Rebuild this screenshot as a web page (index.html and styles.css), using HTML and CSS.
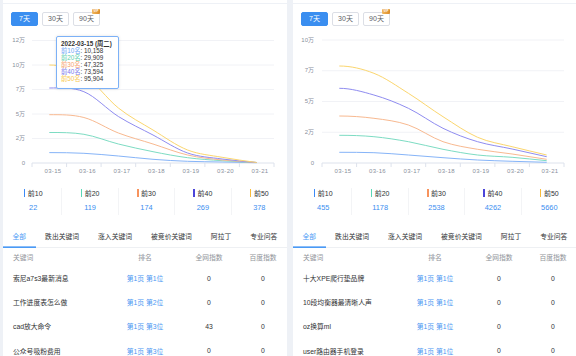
FILE: index.html
```html
<!DOCTYPE html>
<html lang="zh-CN">
<head>
<meta charset="UTF-8" />
<meta name="viewport" content="width=device-width, initial-scale=1"/>
<title>关键词排名趋势</title>
<link rel="stylesheet" href="styles.css">
</head>
<body>

<div class="page">

  <!-- Левая колонка: PC -->
  <div class="col">
    <div class="card-end"></div>
    <section class="panel">
      <div class="ranges">
        <span class="range active">7天</span>
        <span class="range">30天</span>
        <span class="range">90天<i class="vip">VIP</i></span>
      </div>

      <div class="chart">
        <svg width="284" height="150" viewBox="0 0 284 150">
          <g class="grid">
            <line x1="29" y1="10.5" x2="271" y2="10.5"/>
            <line x1="29" y1="35" x2="271" y2="35"/>
            <line x1="29" y1="59.5" x2="271" y2="59.5"/>
            <line x1="29" y1="84" x2="271" y2="84"/>
            <line x1="29" y1="108.5" x2="271" y2="108.5"/>
          </g>
          <g class="axis">
            <line x1="29" y1="133" x2="271" y2="133"/>
            <line x1="29" y1="133" x2="29" y2="137"/>
            <line x1="63.6" y1="133" x2="63.6" y2="137"/>
            <line x1="98.1" y1="133" x2="98.1" y2="137"/>
            <line x1="132.7" y1="133" x2="132.7" y2="137"/>
            <line x1="167.3" y1="133" x2="167.3" y2="137"/>
            <line x1="201.9" y1="133" x2="201.9" y2="137"/>
            <line x1="236.4" y1="133" x2="236.4" y2="137"/>
            <line x1="271" y1="133" x2="271" y2="137"/>
          </g>
          <g class="ylabels">
            <text x="22" y="10.5">12万</text>
            <text x="22" y="35">10万</text>
            <text x="22" y="59.5">7万</text>
            <text x="22" y="84">5万</text>
            <text x="22" y="108.5">2万</text>
            <text x="22" y="133">0</text>
          </g>
          <g class="xlabels">
            <text x="50" y="141">03-15</text>
            <text x="84.5" y="141">03-16</text>
            <text x="119" y="141">03-17</text>
            <text x="153.5" y="141">03-18</text>
            <text x="188" y="141">03-19</text>
            <text x="222.5" y="141">03-20</text>
            <text x="257" y="141">03-21</text>
          </g>
          <path class="s10" d="M46.3 122.6 C57.8 122.6 69.4 122.7 80.9 123.3 S103.9 125 115.4 126 S138.5 128.4 150 129.3 S173.1 130.9 184.6 131.3 S207.6 131.8 219.1 132 S242.2 132.5 253.7 132.7"/>
          <path class="s20" d="M46.3 102.5 C57.8 102.5 69.4 102.4 80.9 104.3 S103.9 111.1 115.4 114 S138.5 119.4 150 121.7 S173.1 126.2 184.6 127.7 S207.6 129.9 219.1 130.7 S242.2 132 253.7 132.5"/>
          <path class="s30" d="M46.3 84.7 C57.8 84.7 69.4 84.5 80.9 87.5 S103.9 98.6 115.4 103 S138.5 110.3 150 114 S173.1 122.3 184.6 125 S207.6 128.8 219.1 130 S242.2 131.7 253.7 132.5"/>
          <path class="s40" d="M46.3 58 C57.8 58 69.4 57 80.9 61.7 S103.9 79.3 115.4 86.5 S138.5 98.9 150 105 S173.1 119 184.6 123 S207.6 127.4 219.1 129 S242.2 131.3 253.7 132.5"/>
          <path class="s50" d="M46.3 35 C57.8 35 69.4 37.8 80.9 45 S103.9 68.8 115.4 78 S138.5 93 150 100 S173.1 115.5 184.6 120 S207.6 125.2 219.1 127.3 S242.2 130.8 253.7 132.5"/>
        </svg>

        <div class="tooltip">
          <div class="tip-title">2022-03-15 (周二)</div>
          <div><span class="c10">前10名</span>: 10,158</div>
          <div><span class="c20">前20名</span>: 29,909</div>
          <div><span class="c30">前30名</span>: 47,325</div>
          <div><span class="c40">前40名</span>: 73,594</div>
          <div><span class="c50">前50名</span>: 95,904</div>
        </div>
      </div>

      <div class="stats">
        <div class="stat"><div class="stat-name b10">前10</div><div class="stat-num">22</div></div>
        <div class="stat"><div class="stat-name b20">前20</div><div class="stat-num">119</div></div>
        <div class="stat"><div class="stat-name b30">前30</div><div class="stat-num">174</div></div>
        <div class="stat"><div class="stat-name b40">前40</div><div class="stat-num">269</div></div>
        <div class="stat"><div class="stat-name b50">前50</div><div class="stat-num">378</div></div>
      </div>

      <div class="tabs">
        <span class="tab active">全部</span>
        <span class="tab">跌出关键词</span>
        <span class="tab">涨入关键词</span>
        <span class="tab">被竞价关键词</span>
        <span class="tab">阿拉丁</span>
        <span class="tab">专业问答</span>
      </div>

      <div class="table">
        <div class="row head"><span>关键词</span><span>排名</span><span>全网指数</span><span>百度指数</span></div>
        <div class="row"><span>索尼a7s3最新消息</span><a href="#">第1页 第1位</a><span>0</span><span>0</span></div>
        <div class="row"><span>工作进度表怎么做</span><a href="#">第1页 第2位</a><span>0</span><span>0</span></div>
        <div class="row"><span>cad放大命令</span><a href="#">第1页 第3位</a><span>43</span><span>0</span></div>
        <div class="row"><span>公众号吸粉费用</span><a href="#">第1页 第3位</a><span>0</span><span>0</span></div>
      </div>
    </section>
  </div>

  <!-- Правая колонка: мобильные -->
  <div class="col">
    <div class="card-end"></div>
    <section class="panel">
      <div class="ranges">
        <span class="range active">7天</span>
        <span class="range">30天</span>
        <span class="range">90天<i class="vip">VIP</i></span>
      </div>

      <div class="chart">
        <svg width="284" height="150" viewBox="0 0 284 150">
          <g class="grid">
            <line x1="29" y1="10" x2="271" y2="10"/>
            <line x1="29" y1="40.75" x2="271" y2="40.75"/>
            <line x1="29" y1="71.5" x2="271" y2="71.5"/>
            <line x1="29" y1="102.25" x2="271" y2="102.25"/>
          </g>
          <g class="axis">
            <line x1="29" y1="133" x2="271" y2="133"/>
            <line x1="29" y1="133" x2="29" y2="137"/>
            <line x1="63.6" y1="133" x2="63.6" y2="137"/>
            <line x1="98.1" y1="133" x2="98.1" y2="137"/>
            <line x1="132.7" y1="133" x2="132.7" y2="137"/>
            <line x1="167.3" y1="133" x2="167.3" y2="137"/>
            <line x1="201.9" y1="133" x2="201.9" y2="137"/>
            <line x1="236.4" y1="133" x2="236.4" y2="137"/>
            <line x1="271" y1="133" x2="271" y2="137"/>
          </g>
          <g class="ylabels">
            <text x="21" y="10">10万</text>
            <text x="21" y="40.75">7万</text>
            <text x="21" y="71.5">5万</text>
            <text x="21" y="102.25">2万</text>
            <text x="21" y="133">0</text>
          </g>
          <g class="xlabels">
            <text x="50" y="141">03-15</text>
            <text x="84.5" y="141">03-16</text>
            <text x="119" y="141">03-17</text>
            <text x="153.5" y="141">03-18</text>
            <text x="188" y="141">03-19</text>
            <text x="222.5" y="141">03-20</text>
            <text x="257" y="141">03-21</text>
          </g>
          <path class="s10" d="M46.3 122.3 C57.8 122.3 69.4 122.3 80.9 122.7 S103.9 124.2 115.4 125 S138.5 126.9 150 127.7 S173.1 129.4 184.6 130 S207.6 130.9 219.1 131.3 S242.2 132 253.7 132.3"/>
          <path class="s20" d="M46.3 105.3 C57.8 105.3 69.4 105.6 80.9 106.7 S103.9 109.6 115.4 111.7 S138.5 117.1 150 119.3 S173.1 123.7 184.6 125 S207.6 126.4 219.1 127.3 S242.2 129.6 253.7 130.7"/>
          <path class="s30" d="M46.3 86 C57.8 86 69.4 86.8 80.9 88.3 S103.9 91.1 115.4 95 S138.5 107.7 150 111.7 S173.1 117.3 184.6 119.3 S207.6 122.3 219.1 124 S242.2 127.5 253.7 129.3"/>
          <path class="s40" d="M46.3 58.3 C57.8 58.3 69.4 61.7 80.9 65 S103.9 72.8 115.4 78.3 S138.5 92.7 150 98.3 S173.1 108.3 184.6 111.7 S207.6 116.5 219.1 119 S242.2 124.1 253.7 126.7"/>
          <path class="s50" d="M46.3 36 C57.8 36 69.4 38.8 80.9 43.3 S103.9 56.1 115.4 63.3 S138.5 79.4 150 86.7 S173.1 102.3 184.6 107.3 S207.6 113.8 219.1 116.7 S242.2 122.2 253.7 125"/>
        </svg>
      </div>

      <div class="stats">
        <div class="stat"><div class="stat-name b10">前10</div><div class="stat-num">455</div></div>
        <div class="stat"><div class="stat-name b20">前20</div><div class="stat-num">1178</div></div>
        <div class="stat"><div class="stat-name b30">前30</div><div class="stat-num">2538</div></div>
        <div class="stat"><div class="stat-name b40">前40</div><div class="stat-num">4262</div></div>
        <div class="stat"><div class="stat-name b50">前50</div><div class="stat-num">5660</div></div>
      </div>

      <div class="tabs">
        <span class="tab active">全部</span>
        <span class="tab">跌出关键词</span>
        <span class="tab">涨入关键词</span>
        <span class="tab">被竞价关键词</span>
        <span class="tab">阿拉丁</span>
        <span class="tab">专业问答</span>
      </div>

      <div class="table">
        <div class="row head"><span>关键词</span><span>排名</span><span>全网指数</span><span>百度指数</span></div>
        <div class="row"><span>十大XPE爬行垫品牌</span><a href="#">第1页 第1位</a><span>0</span><span>0</span></div>
        <div class="row"><span>10段均衡器最清晰人声</span><a href="#">第1页 第1位</a><span>0</span><span>0</span></div>
        <div class="row"><span>oz换算ml</span><a href="#">第1页 第1位</a><span>0</span><span>0</span></div>
        <div class="row"><span>user路由器手机登录</span><a href="#">第1页 第1位</a><span>0</span><span>0</span></div>
      </div>
    </section>
  </div>

</div>

</body>
</html>
```

FILE: styles.css
```css
* {
    margin: 0;
    padding: 0;
    box-sizing: border-box;
}

html, body {
    height: 100%;
}

body {
    font-family: 'Liberation Sans', 'Noto Sans CJK SC', sans-serif;
    background: #eef1f6;
    color: #303133;
    overflow: hidden;
}

/* Две колонки */
.page {
    display: flex;
    gap: 6px;
    padding-left: 3px;
    height: 100%;
}
.col {
    width: 284px;
    flex-shrink: 0;
    display: flex;
    flex-direction: column;
}
/* Хвост предыдущей карточки сверху */
.card-end {
    height: 3px;
    background: #fff;
    margin-bottom: 1px;
}
.panel {
    flex: 1;
    min-height: 0;
    overflow: hidden;
    background: #fff;
    padding-top: 8px;
}

/* Кнопки периода */
.ranges {
    display: flex;
    gap: 4px;
    padding-left: 8px;
}
.range {
    position: relative;
    width: 27px;
    height: 14px;
    line-height: 12px;
    border: 1px solid #dcdfe6;
    border-radius: 2px;
    font-size: 7px;
    color: #606266;
    text-align: center;
}
.range.active {
    background: #3a8ef0;
    border-color: #3a8ef0;
    color: #fff;
}
.vip {
    position: absolute;
    top: -4px;
    right: -1px;
    width: 8px;
    height: 5px;
    line-height: 5px;
    border-radius: 1px;
    background: linear-gradient(90deg, #f2b85c, #d98a2b);
    color: #fff;
    font-size: 3px;
    font-style: normal;
    font-weight: bold;
    text-align: center;
}

/* График */
.chart {
    position: relative;
    margin-top: 4px;
    height: 150px;
}
.chart svg {
    display: block;
}
.grid line {
    stroke: #f1f2f6;
    stroke-width: 1;
}
.axis line {
    stroke: #dde2ec;
    stroke-width: 1;
}
.ylabels text {
    font-size: 6px;
    fill: #8a909c;
    text-anchor: end;
    dominant-baseline: middle;
}
.xlabels text {
    font-size: 6px;
    fill: #8a909c;
    text-anchor: middle;
    dominant-baseline: middle;
    letter-spacing: 0.3px;
}
.chart path {
    fill: none;
    stroke-width: 1;
}
.s10 { stroke: #86b4f8; }
.s20 { stroke: #7ddcc3; }
.s30 { stroke: #f8b990; }
.s40 { stroke: #8f8cf0; }
.s50 { stroke: #fbd66e; }

/* Подсказка */
.tooltip {
    position: absolute;
    top: 6px;
    left: 53px;
    width: 63px;
    height: 53px;
    padding: 3px 4px;
    background: rgba(255, 255, 255, 0.94);
    border: 1px solid #7cb1f7;
    border-radius: 2px;
    box-shadow: 0 0 3px rgba(0, 0, 0, 0.12);
    font-size: 6.3px;
    line-height: 7.1px;
    color: #333;
    white-space: nowrap;
}
.tip-title {
    font-weight: bold;
}
.c10 { color: #6ea6f7; }
.c20 { color: #5ccfae; }
.c30 { color: #f5a06c; }
.c40 { color: #7b78ee; }
.c50 { color: #f9c84e; }

/* Итоги по позициям */
.stats {
    display: grid;
    grid-template-columns: repeat(5, 1fr);
    padding-left: 2px;
    margin-top: 8px;
}
.stat {
    text-align: center;
    padding-bottom: 2px;
    border-left: 1px solid #f3f4f6;
}
.stat:first-child {
    border-left: none;
}
.stat-name {
    font-size: 7px;
    line-height: 11px;
    color: #303133;
}
.stat-name::before {
    content: "";
    display: inline-block;
    width: 1.5px;
    height: 8px;
    margin-right: 2.5px;
    vertical-align: -1px;
    background: currentColor;
}
.b10::before { background: #3d8af7; }
.b20::before { background: #5ad8b6; }
.b30::before { background: #f7935d; }
.b40::before { background: #4c45d9; }
.b50::before { background: #f8bb3a; }
.stat-num {
    margin-top: 3px;
    font-size: 7.4px;
    line-height: 11px;
    color: #3a8ef0;
}

/* Вкладки */
.tabs {
    display: flex;
    margin-top: 11px;
    border-bottom: 1px solid #eef0f3;
}
.tab {
    padding: 0 9.5px;
    height: 22px;
    line-height: 21px;
    font-size: 6.8px;
    color: #303133;
    margin-bottom: -1px;
    border-bottom: 1px solid transparent;
}
.tab.active {
    color: #4a9af5;
    border-bottom-color: #4a9af5;
    box-shadow: inset 0 -1px 0 #8bbdf8;
}

/* Таблица ключевых слов */
.row {
    display: grid;
    grid-template-columns: 98px 68px 60px 48px;
    padding-left: 10px;
    height: 24.2px;
    align-items: center;
    font-size: 6.8px;
    color: #303133;
}
.row span:not(:first-child),
.row a {
    text-align: center;
}
.row a {
    color: #4b97f2;
    text-decoration: none;
}
.row.head {
    height: 18px;
    color: #909399;
}
```
